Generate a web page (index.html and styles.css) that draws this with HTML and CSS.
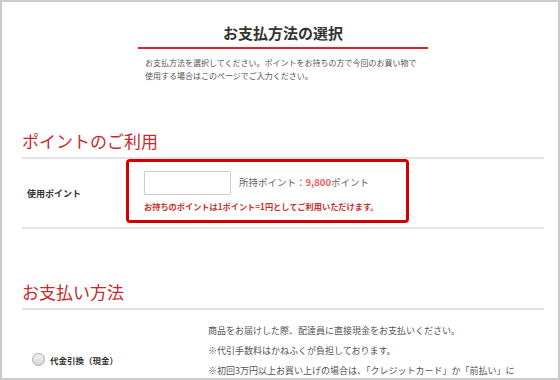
FILE: index.html
```html
<!DOCTYPE html>
<html lang="ja">
<head>
    <meta charset="UTF-8">
    <title>お支払方法の選択</title>
    <link rel="stylesheet" href="styles.css">
</head>
<body>
    <div class="page">
        <div class="intro">
            <h1 class="intro-title">お支払方法の選択</h1>
            <p class="intro-text">お支払方法を選択してください。ポイントをお持ちの方で今回のお買い物で<br>使用する場合はこのページでご入力ください。</p>
        </div>

        <div class="section">
            <h2 class="section-title">ポイントのご利用</h2>
            <div class="row point-row">
                <div class="row-label">使用ポイント</div>
                <div class="point-box">
                    <div class="point-line">
                        <input type="text" class="point-input">
                        <span class="point-owned">所持ポイント：<b class="point-num">9,800</b>ポイント</span>
                    </div>
                    <p class="point-note">お持ちのポイントは1ポイント=1円としてご利用いただけます。</p>
                </div>
            </div>
        </div>

        <div class="section section-pay">
            <h2 class="section-title">お支払い方法</h2>
            <div class="row pay-row">
                <label class="pay-label"><span class="radio"></span>代金引換（現金）</label>
                <div class="pay-text">
                    <p>商品をお届けした際、配達員に直接現金をお支払いください。</p>
                    <p>※代引手数料はかねふくが負担しております。</p>
                    <p>※初回3万円以上お買い上げの場合は、「クレジットカード」か「前払い」に</p>
                </div>
            </div>
        </div>
    </div>
</body>
</html>
```

FILE: styles.css
```css
body {
    margin: 0;
    font-family: "Noto Sans CJK JP", "Noto Sans", sans-serif;
    background-color: #fff;
}
.page {
    width: 560px;
    height: 380px;
    box-sizing: border-box;
    border: 2px solid #cacaca;
    padding: 0 14px 0 20px;
    overflow: hidden;
}
.intro {
    width: 290px;
    margin: 0 auto;
    padding-top: 21px;
}
.intro-title {
    margin: 0;
    padding-bottom: 4px;
    border-bottom: 2px solid #d9262b;
    font-size: 15px;
    line-height: 20px;
    text-align: center;
    color: #333;
}
.intro-text {
    margin: 7px 0 0;
    padding-left: 7px;
    font-size: 8px;
    line-height: 13px;
    color: #555;
}
.section-title {
    margin: 0;
    padding-bottom: 4px;
    border-bottom: 2px solid #e3e3e3;
    font-size: 17px;
    line-height: 24px;
    font-weight: normal;
    color: #c8282c;
}
.section {
    margin-top: 47px;
}
.row {
    display: flex;
}
.point-row {
    align-items: center;
    border-bottom: 2px solid #e3e3e3;
}
.row-label {
    width: 99px;
    padding-left: 5px;
    font-size: 9px;
    font-weight: bold;
    color: #333;
}
.point-box {
    width: 262px;
    margin-bottom: 4px;
    padding: 9px 0 8px 15px;
    border: 3px solid #d40000;
    border-radius: 4px;
}
.point-line {
    display: flex;
    align-items: center;
    gap: 8px;
}
.point-input {
    width: 87px;
    height: 24px;
    box-sizing: border-box;
    margin: 0;
    border: 1px solid #ccc;
    border-radius: 1px;
}
.point-owned {
    font-size: 9.5px;
    color: #666;
    margin-top: -3px;
}
.point-num {
    color: #f25a5a;
}
.point-note {
    margin: 5px 0 0;
    font-size: 8.2px;
    line-height: 12px;
    font-weight: bold;
    color: #c9302c;
}
.section-pay {
    margin-top: 51px;
}
.pay-label {
    display: flex;
    align-items: center;
    gap: 5px;
    width: 176px;
    padding: 43px 0 0 10px;
    align-self: flex-start;
    font-size: 8.5px;
    line-height: 12px;
    font-weight: bold;
    color: #333;
}
.radio {
    width: 11px;
    height: 11px;
    border: 1px solid #aaa;
    border-radius: 50%;
    background: linear-gradient(#f2f2f2, #d8d8d8);
}
.pay-text {
    padding-top: 11px;
}
.pay-text p {
    margin: 0;
    font-size: 9px;
    line-height: 20px;
    color: #555;
}
```
